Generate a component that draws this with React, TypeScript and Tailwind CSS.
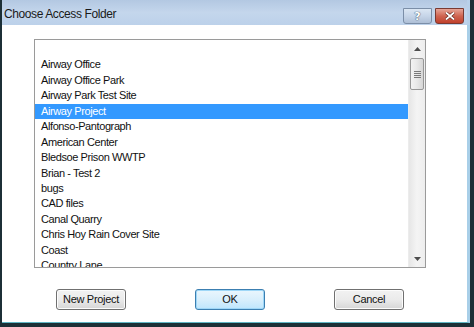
const projects = [
  "",
  "Airway Office",
  "Airway Office Park",
  "Airway Park Test Site",
  "Airway Project",
  "Alfonso-Pantograph",
  "American Center",
  "Bledsoe Prison WWTP",
  "Brian - Test 2",
  "bugs",
  "CAD files",
  "Canal Quarry",
  "Chris Hoy Rain Cover Site",
  "Coast",
  "Country Lane",
];

const selected = 4;

function ScrollBar() {
  return (
    <div className="w-[17px] h-full flex flex-col bg-gradient-to-r from-[#e6e6e6] via-[#f4f4f4] to-[#ededed] border-l border-[#ececec]">
      <div className="h-[17px] flex items-center justify-center">
        <svg width="7" height="4" viewBox="0 0 7 4">
          <path d="M0 4 L3.5 0 L7 4 Z" fill="#4d4d4d" />
        </svg>
      </div>
      <div className="mx-[1px] mt-[1px] h-[32px] rounded-[2px] border border-[#979797] bg-gradient-to-r from-[#f3f3f3] via-[#e8e8e8] to-[#d6d6d6] flex flex-col items-center justify-center gap-[1px]">
        {[0, 1, 2, 3].map((i) => (
          <div key={i} className="w-[7px] h-[1px] bg-[#7a7a7a]" />
        ))}
      </div>
      <div className="flex-1" />
      <div className="h-[17px] flex items-center justify-center">
        <svg width="7" height="4" viewBox="0 0 7 4">
          <path d="M0 0 L7 0 L3.5 4 Z" fill="#4d4d4d" />
        </svg>
      </div>
    </div>
  );
}

function Button({ label, primary, className }: { label: string; primary?: boolean; className?: string }) {
  return (
    <button
      className={
        "block w-[70px] h-[21px] rounded-[3px] border text-[11px] tracking-[-0.3px] text-[#111] " +
        (primary
          ? "border-[#3c7fb1] bg-gradient-to-b from-[#eaf6fd] via-[#d9effc] to-[#bee6fd] shadow-[inset_0_0_0_1px_#9fd7f7] "
          : "border-[#707070] bg-gradient-to-b from-[#f2f2f2] via-[#ebebeb] to-[#d6d6d6] shadow-[inset_0_0_0_1px_#fcfcfc] ") +
        (className ?? "")
      }
      style={{ fontFamily: '"Liberation Sans", Arial, sans-serif' }}
    >
      {label}
    </button>
  );
}

export default function App() {
  return (
    <div className="w-[474px] h-[327px] bg-[#1c2f36] pl-[2px] pr-[4px] pb-[4px] flex flex-col">
      <div className="h-[25px] flex items-start bg-gradient-to-b from-[#b3c8e2] via-[#c4d6ec] to-[#bcd1ea] border-r-[3px] border-[#b8d0ea]">
        <div
          className="pl-[2px] pt-[5px] text-[12px] tracking-[-0.4px] text-[#1a1a1a]"
          style={{ fontFamily: '"Liberation Sans", Arial, sans-serif' }}
        >
          Choose Access Folder
        </div>
        <div className="flex-1" />
        <div className="mt-[8px] w-[29px] h-[16px] rounded-b-[3px] border border-[#7b8ea7] bg-gradient-to-b from-[#dbe6f3] via-[#c6d5e8] to-[#aebfd6] flex items-center justify-center">
          <span
            className="text-[11px] font-bold text-white leading-none"
            style={{ fontFamily: '"DejaVu Sans", sans-serif', textShadow: "0 0 1px #344a66, 0 0 1px #344a66" }}
          >
            ?
          </span>
        </div>
        <div className="mt-[8px] ml-[3px] mr-[3px] w-[29px] h-[16px] rounded-b-[3px] border border-[#7a3a32] bg-gradient-to-b from-[#e5a497] via-[#cf6451] to-[#c0402c] flex items-center justify-center">
          <svg width="10" height="8" viewBox="0 0 10 8">
            <path d="M1 0.5 L9 7.5 M9 0.5 L1 7.5" stroke="#5a2018" strokeWidth="3" />
            <path d="M1 0.5 L9 7.5 M9 0.5 L1 7.5" stroke="#ffffff" strokeWidth="1.8" />
          </svg>
        </div>
      </div>
      <div className="flex-1 bg-white border-r-[3px] border-[#a9cfe8] border-b border-b-[#5fb6c4] flex flex-col pl-[32px] pt-[14px]">
        <div className="w-[392px] h-[229px] border border-[#9a9a9a] flex">
          <div
            className="flex-1 pt-[2px] overflow-hidden text-[11px] tracking-[-0.4px] text-[#111]"
            style={{ fontFamily: '"Liberation Sans", Arial, sans-serif' }}
          >
            {projects.map((p, i) => (
              <div
                key={i}
                className={
                  "h-[15.45px] leading-[15.45px] pl-[6px] whitespace-nowrap " +
                  (i === selected ? "bg-[#3399ff] text-white" : "")
                }
              >
                {p}
              </div>
            ))}
          </div>
          <ScrollBar />
        </div>
        <div className="mt-[21px] flex items-start">
          <Button label="New Project" className="ml-[22px]" />
          <Button label="OK" primary className="ml-[69px]" />
          <Button label="Cancel" className="ml-[69px]" />
        </div>
      </div>
    </div>
  );
}
